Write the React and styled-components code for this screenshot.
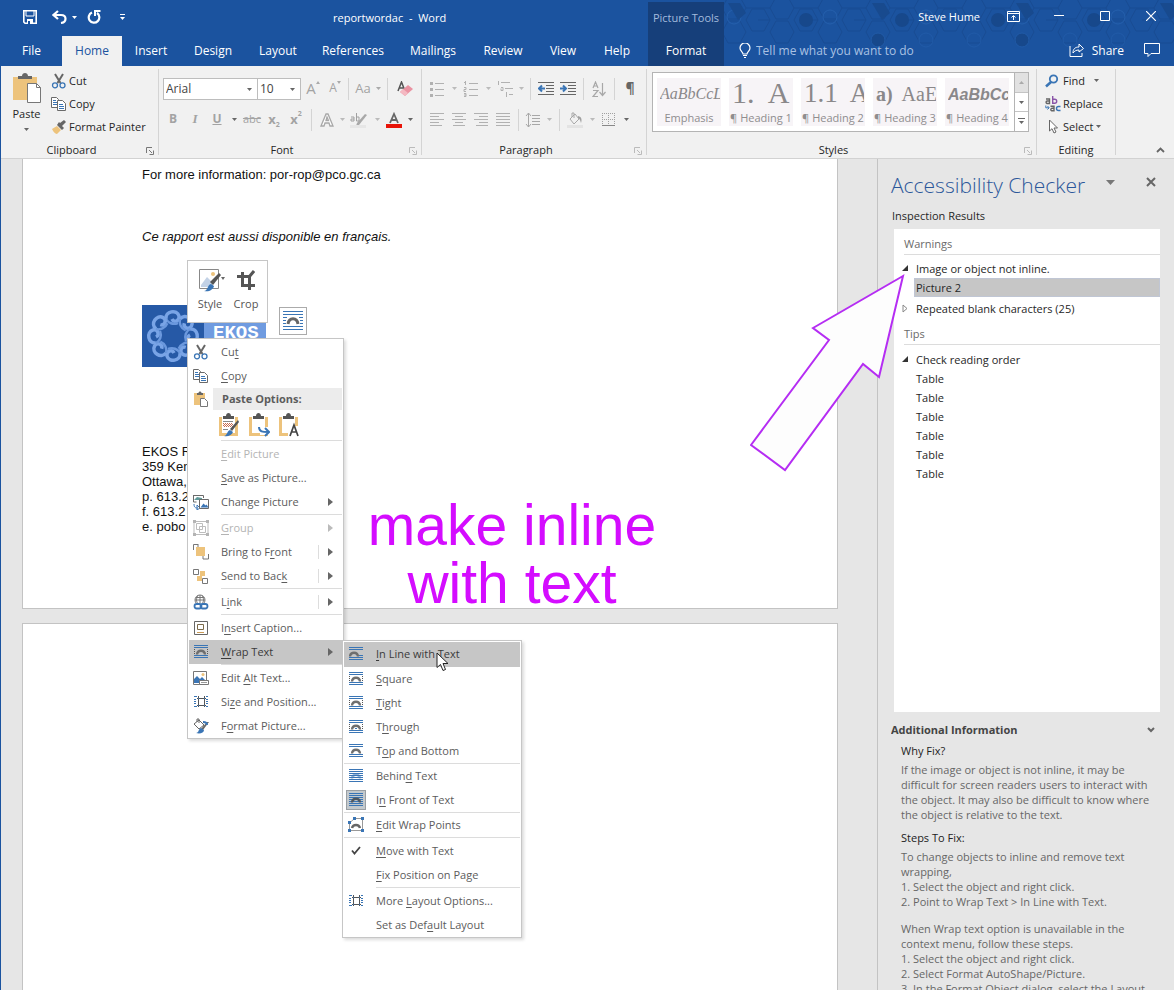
import React from "react";
import styled, { createGlobalStyle, css } from "styled-components";

const ui = `"Open Sans", "Noto Sans", sans-serif`;
const blue = "#1b539f";
const link = "#3a75b5";
const faint = "#b1b1b1";
const gold = "#edc37c";

const Global = createGlobalStyle`
  * { box-sizing: border-box; }
  body { margin: 0; overflow: hidden; font-family: ${ui}; font-size: 11px; color: #262626; }
  button { border: 0; background: none; padding: 0; margin: 0; font: inherit; color: inherit; cursor: default; }
  h1, h2, h3, p, ul { margin: 0; padding: 0; font-size: 11px; font-weight: 400; list-style: none; }
  svg { display: block; flex: none; }
`;

const Window = styled.div`
  display: flex;
  flex-direction: column;
  height: 100vh;
  border-left: 1px solid ${blue};
  background: #e6e6e6;
`;

/* ---------- header ---------- */
const Header = styled.header`
  display: flex;
  position: relative;
  flex: none;
  height: 66px;
  background: ${blue};
  color: #fff;
  font-size: 12px;
`;
const Pattern = styled.svg`
  position: absolute;
  right: 0;
  top: 0;
`;
const HeaderLeft = styled.div`
  width: 647px;
  display: flex;
  flex-direction: column;
`;
const HeaderRow = styled.div`
  display: flex;
  align-items: center;
  height: 36px;
`;
const TitleRow = styled(HeaderRow)`
  padding-bottom: 2px;
`;
const QuickBar = styled.div`
  display: flex;
  align-items: center;
  width: 332px;
  padding-left: 11px;
`;
const QuickButton = styled.button`
  width: ${(p) => p.$w}px;
  height: 22px;
  display: flex;
  align-items: center;
  justify-content: center;
`;
const DocTitle = styled.h1`
  font-size: 11px;
  white-space: pre;
`;
const Tabs = styled.nav`
  display: flex;
  height: 30px;
`;
const Tab = styled.button`
  width: ${(p) => p.$w}px;
  height: 30px;
  padding-bottom: 2px;
  text-align: center;
  white-space: nowrap;
  ${(p) => p.$active && css`
    background: #f1f1f1;
    color: ${blue};
  `}
`;
const ContextTab = styled.div`
  position: relative;
  width: 76px;
  margin-top: 2px;
  background: #163f7a;
  display: flex;
  flex-direction: column;
  text-align: center;
`;
const ContextTitle = styled.span`
  height: 34px;
  line-height: 32px;
  font-size: 11px;
  color: #a3bbdd;
`;
const HeaderRight = styled.div`
  position: relative;
  flex: 1;
  display: flex;
  flex-direction: column;
`;
const WindowRow = styled(HeaderRow)`
  justify-content: flex-end;
  padding-bottom: 4px;
`;
const UserName = styled.span`
  font-size: 11px;
  margin-right: 10px;
`;
const TellRow = styled(HeaderRow)`
  height: 30px;
  padding: 0 0 2px 15px;
`;
const TellInput = styled.input`
  flex: 1;
  min-width: 0;
  margin-left: 5px;
  border: 0;
  padding: 0;
  outline: 0;
  background: none;
  font: 12px ${ui};
  color: #fff;
  &::placeholder { color: #a9c1e3; opacity: 1; }
`;
const ShareButton = styled.button`
  display: flex;
  align-items: center;
  gap: 8px;
  margin-right: 20px;
`;
const CommentButton = styled.button`
  margin-right: 14px;
`;

/* ---------- ribbon ---------- */
const Ribbon = styled.div`
  display: flex;
  flex: none;
  height: 93px;
  padding-top: 3px;
  background: #f1f1f1;
  border-bottom: 1px solid #d2d2d2;
`;
const Group = styled.section`
  display: flex;
  flex-direction: column;
  width: ${(p) => p.$w}px;
  height: 86px;
  border-right: 1px solid #d4d4d4;
`;
const GroupBody = styled.div`
  display: flex;
  flex: none;
  height: 69px;
  padding-left: ${(p) => p.$pl || 0}px;
`;
const GroupLabel = styled.h2`
  position: relative;
  flex: none;
  line-height: 16px;
  text-align: center;
  padding-right: ${(p) => p.$pr || 0}px;
  padding-top: 4px;
`;
const Launcher = styled.button`
  position: absolute;
  right: 4px;
  top: 9px;
`;
const PasteButton = styled.button`
  width: 51px;
  margin-right: -1px;
  display: flex;
  flex-direction: column;
  align-items: center;
  padding-top: 4px;
`;
const PasteText = styled.span`
  line-height: 20px;
  margin-bottom: 4px;
`;
const CommandList = styled.div`
  display: flex;
  flex-direction: column;
`;
const Command = styled.button`
  display: flex;
  align-items: center;
  height: 23px;
  white-space: nowrap;
`;
const CommandIcon = styled.span`
  width: 18px;
  display: flex;
`;
const ToolRows = styled.div`
  display: flex;
  flex-direction: column;
  padding-top: 4px;
`;
const ToolRow = styled.div`
  display: flex;
  align-items: center;
  height: 31px;
`;
const Tool = styled.button`
  display: flex;
  align-items: center;
  justify-content: center;
  width: ${(p) => p.$w || 22}px;
  height: 22px;
  padding-bottom: ${(p) => (p.$f ? 2 : 0)}px;
  color: ${(p) => p.$c || "#a3a3a3"};
  font: ${(p) => p.$f || `13px ${ui}`};
  ${(p) => p.$u && css`text-decoration: underline;`}
  ${(p) => p.$s && css`text-decoration: line-through;`}
`;
const Script = styled.span`
  font: 700 7px ${ui};
  align-self: ${(p) => (p.$up ? "flex-start" : "flex-end")};
`;
const Divider = styled.span`
  width: 1px;
  height: 22px;
  margin: 0 ${(p) => p.$m}px;
  background: #d4d4d4;
`;
const Combo = styled.label`
  position: relative;
  display: block;
  width: ${(p) => p.$w}px;
  height: 22px;
  margin-right: -1px;
  & svg { position: absolute; right: 6px; top: 10px; pointer-events: none; }
`;
const Select = styled.select`
  appearance: none;
  width: 100%;
  height: 22px;
  border: 1px solid #bdbdbd;
  border-radius: 0;
  background: #fff;
  padding: 0 2px;
  font: 12px ${ui};
  color: #444;
`;
const Gallery = styled.div`
  display: flex;
  width: 377px;
  height: 60px;
  margin: 3px 0 0 5px;
  border: 1px solid #b4b4b4;
  background: #fff;
`;
const Cells = styled.div`
  flex: 1;
  display: flex;
  gap: 8px;
  padding: 5px 0 0 4px;
`;
const StyleCell = styled.button`
  width: 64px;
  height: 48px;
  background: #f7f4f7;
  display: flex;
  flex-direction: column;
`;
const Preview = styled.span`
  height: 32px;
  width: 60px;
  margin-left: 3px;
  overflow: hidden;
  white-space: pre;
  text-align: left;
  color: #8a888a;
  font: ${(p) => p.$f};
`;
const CellName = styled.span`
  width: 64px;
  line-height: 16px;
  text-align: center;
  white-space: nowrap;
  color: #8f8d8f;
`;
const Pager = styled.div`
  width: 14px;
  display: flex;
  flex-direction: column;
  border-left: 1px solid #b4b4b4;
`;
const PagerButton = styled.button`
  flex: 1;
  display: flex;
  align-items: center;
  justify-content: center;
  background: ${(p) => (p.$off ? "#e1e1e1" : "#fff")};
  & + & { border-top: 1px solid #c4c4c4; }
`;
const CollapseButton = styled.button`
  margin: auto 9px 5px auto;
`;

/* ---------- workspace ---------- */
const Workspace = styled.main`
  position: relative;
  flex: 1;
  min-height: 0;
  display: flex;
`;
const Canvas = styled.div`
  position: relative;
  flex: 1;
  min-width: 0;
  display: flex;
  flex-direction: column;
  gap: 14px;
  padding: 0 39px 0 21px;
  overflow: hidden;
`;
const Page = styled.article`
  background: #fff;
  border: 1px solid #c3c3c3;
  padding-left: 119px;
  font: 13px/16px "Liberation Sans", Arial, sans-serif;
  color: #111;
  ${(p) => p.$first
    ? css`border-top: 0; height: 450px; flex: none; padding-top: 8px;`
    : css`border-bottom: 0; flex: 1;`}
`;
const Para = styled.p`
  font-size: 13px;
  margin-bottom: ${(p) => p.$mb}px;
  ${(p) => p.$i && css`font-style: italic;`}
`;
const Address = styled.address`
  font-style: normal;
  line-height: 15px;
  margin-top: 77px;
`;

const MiniBar = styled.div`
  position: absolute;
  left: 186px;
  top: 101px;
  width: 81px;
  height: 63px;
  display: flex;
  padding: 6px 2px 0 4px;
  background: #fff;
  border: 1px solid #c6c6c6;
  color: #555;
`;
const MiniButton = styled.button`
  width: 36px;
  display: flex;
  flex-direction: column;
  align-items: center;
  & span { line-height: 22px; }
`;
const LayoutOptions = styled.button`
  position: absolute;
  left: 278px;
  top: 148px;
  width: 28px;
  height: 28px;
  display: flex;
  align-items: center;
  justify-content: center;
  background: #fff;
  border: 1px solid #ababab;
`;
const Menu = styled.div`
  position: absolute;
  left: ${(p) => p.$x}px;
  top: ${(p) => p.$y}px;
  width: ${(p) => p.$w}px;
  padding: 1px 1px 0;
  background: #fff;
  border: 1px solid #c6c6c6;
  box-shadow: 2px 2px 3px rgba(0, 0, 0, 0.14);
  color: #5c5c5c;
`;
const MenuItem = styled.button`
  display: flex;
  align-items: center;
  width: 100%;
  height: ${(p) => (p.$tall ? 25 : 24)}px;
  padding-bottom: ${(p) => (p.$tall ? 1 : 0)}px;
  text-align: left;
  white-space: nowrap;
  ${(p) => p.$off && css`color: #b4b4b4;`}
  ${(p) => p.$on && css`background: #c6c6c6; color: #3b3b3b;`}
  & u { text-underline-offset: 2px; }
`;
const MenuIcon = styled.span`
  width: 20px;
  height: 20px;
  margin: 0 10px 0 2px;
  display: flex;
  align-items: center;
  justify-content: center;
  ${(p) => p.$boxed && css`background: #c3c9cd; border: 1px solid #9a9fa3;`}
`;
const MenuText = styled.span`
  flex: 1;
  padding-bottom: 2px;
`;
const MenuMore = styled.span`
  display: flex;
  justify-content: flex-end;
  align-items: center;
  width: 24px;
  height: 14px;
  padding: 0 9px 0 0;
  ${(p) => p.$split && css`border-left: 1px solid #ddd;`}
`;
const Rule = styled.div`
  height: ${(p) => p.$h || 2}px;
  border-top: 1px solid #dcdcdc;
  margin-left: ${(p) => (p.$full ? 0 : 32)}px;
`;
const MenuHead = styled.div`
  display: flex;
  align-items: center;
  height: 22px;
`;
const MenuHeadText = styled.strong`
  flex: 1;
  height: 22px;
  margin-left: -8px;
  padding-left: 9px;
  line-height: 21px;
  background: #ececec;
`;
const PasteRow = styled.div`
  display: flex;
  gap: 4px;
  height: 30px;
  align-items: center;
  padding-left: 27px;
`;
const PasteOption = styled.button`
  width: 26px;
  height: 26px;
  display: flex;
  align-items: center;
  justify-content: center;
`;
const Note = styled.p`
  position: absolute;
  left: 361px;
  top: 337px;
  width: 300px;
  text-align: center;
  font: 57px/58px "Liberation Sans", Arial, sans-serif;
  color: #d40cff;
`;
const Arrow = styled.svg`
  position: absolute;
  right: 264px;
  top: 110px;
`;
const Pointer = styled.svg`
  position: absolute;
  left: 435px;
  top: 493px;
`;

/* ---------- accessibility pane ---------- */
const Pane = styled.aside`
  width: 297px;
  flex: none;
  display: flex;
  flex-direction: column;
  border-left: 1px solid #c3c3c3;
  padding: 9px 14px 0 13px;
  overflow: hidden;
`;
const PaneHead = styled.div`
  display: flex;
  align-items: flex-start;
`;
const PaneTitle = styled.h2`
  flex: 1;
  font-size: 21px;
  line-height: 34px;
  font-weight: 300;
  color: #2b579a;
  white-space: nowrap;
`;
const PaneButton = styled.button`
  width: 20px;
  height: 20px;
  margin: 4px 0 0 16px;
  display: flex;
  align-items: center;
  justify-content: center;
  & + & { margin: 4px 0 0 22px; }
`;
const PaneLabel = styled.h3`
  line-height: 16px;
  margin: 6px 0 5px 1px;
`;
const Results = styled.div`
  flex: 1;
  min-height: 200px;
  margin-left: 3px;
  padding: 7px 0 0 10px;
  background: #fff;
`;
const Section = styled.h3`
  color: #6a6a6a;
  line-height: 15px;
  padding-bottom: 3px;
  margin-bottom: 4px;
  border-bottom: 1px solid #dcdcdc;
`;
const Tree = styled.ul`
  margin-bottom: ${(p) => p.$mb || 0}px;
`;
const TreeRow = styled.li`
  display: flex;
  align-items: center;
  height: 19px;
  margin-top: ${(p) => p.$mt || 0}px;
`;
const Marker = styled.span`
  display: flex;
  justify-content: center;
  width: 14px;
  margin-left: -6px;
  margin-right: 4px;
`;
const Leaf = styled.button`
  flex: 1;
  height: 19px;
  margin-left: -2px;
  padding-left: 2px;
  text-align: left;
  ${(p) => p.$on && css`background: #c6c6c6; box-shadow: inset 0 0 0 1px #c0c6d4;`}
`;
const Info = styled.section`
  flex: none;
  height: 278px;
  overflow: hidden;
  padding-top: 9px;
`;
const InfoHead = styled.button`
  width: 100%;
  display: flex;
  align-items: center;
  justify-content: space-between;
  padding-right: 5px;
  font-weight: 700;
  line-height: 18px;
  color: #444;
`;
const InfoTitle = styled.h3`
  margin: ${(p) => p.$mt}px 0 3px 10px;
  line-height: 16px;
  color: #222;
`;
const InfoText = styled.p`
  margin: 0 -8px ${(p) => p.$mb || 0}px 10px;
  line-height: 15px;
  white-space: pre-line;
  color: #666;
`;

/* ---------- icons ---------- */
const Svg = ({ w = 16, h = 16, children, ...r }) => (
  <svg width={w} height={h} viewBox={`0 0 ${w} ${h}`} fill="none" aria-hidden="true" {...r}>{children}</svg>
);
const Caret = ({ c = "#666" }) => <Svg w={5} h={3}><path d="M0 0h5L2.500 3z" fill={c} /></Svg>;
const LaunchIcon = ({ c = "#777" }) => (
  <Svg w={8} h={8}><path d="M.5 6V.5H6M3 3l3 3M7.500 3.500v4h-4" stroke={c} /></Svg>
);
const Scissors = () => (
  <Svg>
    <path d="M4 1l5.500 9M12 1L6.500 10" stroke="#666" strokeWidth="2" />
    <circle cx="4" cy="12.300" r="2.500" stroke={link} strokeWidth="1.300" /><circle cx="11.500" cy="12.300" r="2.500" stroke={link} strokeWidth="1.300" />
  </Svg>
);
const CopyIcon = () => (
  <Svg>
    <path d="M.5 1.500h5l2 2v8h-7z" fill="#fff" stroke="#6a6a6a" />
    <path d="M2 4.500h3M2 6.500h4M2 8.500h4" stroke={link} />
    <path d="M6.500 4.500h5l3 3v7h-8z" fill="#fff" stroke="#6a6a6a" />
    <path d="M8 8.500h4M8 10.500h5M8 12.500h5" stroke={link} />
  </Svg>
);
const Painter = () => (
  <Svg>
    <path d="M1 10l5-3 4 4-4 4c-1 0-4-2-5-5z" fill={gold} />
    <path d="M6 6l5 5 2-2-2-2 4-4-2-2-4 3-1-1z" fill="#666" />
  </Svg>
);
const PasteBig = () => (
  <Svg w={28} h={31}>
    <path d="M0 4h24v23H0z" fill={gold} />
    <path d="M5 6V3h4c0-4 6-4 6 0h4v3z" fill="#666" />
    <path d="M14.500 10.500h9l4 4v15h-13z" fill="#fff" stroke="#777" /><path d="M23.500 10.500v4h4" stroke="#777" />
  </Svg>
);
const PasteSmall = () => (
  <Svg>
    <path d="M1 2h11v12H1z" fill={gold} /><path d="M4 4V2h1.500c0-2 3-2 3 0H10v2z" fill="#666" />
    <path d="M7.500 7.500h4l3 3v5h-7z" fill="#fff" stroke="#777" />
  </Svg>
);
const PasteKind = ({ kind }) => (
  <Svg w={22} h={24}>
    <path d="M2.500 4v17.500h16V4" stroke={gold} strokeWidth="3" />
    <path d="M5 6V3h3c0-4 5-4 5 0h3v3z" fill="#555" />
    {kind === "keep" && <><path d="M5 10.500h10M6 11.500h9M5 12.500h10M6 13.500h9" stroke="#c86b4e" strokeDasharray="1 1" /><path d="M5 8.500h10M5 16.500h5" stroke="#888" /><path d="M12 16l8-9 1 2-7 9z" fill="#555" /><path d="M6 23c3 0 3-5 6-6l3 2c-1 3-5 5-9 4z" fill={link} /></>}
    {kind === "merge" && <><path d="M12 14h9v8h-9z" fill="#fff" /><path d="M11 14c0 5 4 5 9 5M17 15l4 4-4 4" stroke={link} strokeWidth="2" /></>}
    {kind === "text" && <><path d="M10 13h12v11H10z" fill="#fff" /><path d="M12 23l4-11 4 11M13.500 19h5" stroke="#444" strokeWidth="1.700" /></>}
  </Svg>
);
const ListIcon = ({ kind }) => (
  <Svg w={16} h={16}>
    <path d="M6 2.500h9M6 8.500h9M6 14.500h9" stroke={faint} />
    {kind === "dot" ? <path d="M1 1h3v3H1zM1 7h3v3H1zM1 13h3v3H1z" fill={faint} />
      : <path d="M2.500 0v4M1 1.500h1M1 6.500h2v2H1v2h2M1 12.500h2v3H1M1 14h2" stroke={faint} />}
  </Svg>
);
const MultiList = () => (
  <Svg w={16} h={16}>
    <path d="M4 1.500h9M8 7.500h8M12 13.500h4M1.500 0v4M4 6.500h2v3H4v-2M9.500 11v5" stroke={faint} />
  </Svg>
);
const Indent = ({ out }) => (
  <Svg w={16} h={14}>
    <path d="M0 .5h16M8 3.500h8M8 6.500h8M8 9.500h8M0 12.500h16" stroke="#666" />
    {out ? <path d="M7 6.500H2M4 3.500L1 6.500l3 3" stroke={link} strokeWidth="2" /> : <path d="M0 6.500h5M3 3.500l3 3-3 3" stroke={link} strokeWidth="2" />}
  </Svg>
);
const alignPaths = {
  left: "M0 .5h14M0 3.500h9M0 6.500h14M0 9.500h9M0 12.500h12",
  center: "M0 .5h14M3 3.500h8M0 6.500h14M3 9.500h8M1 12.500h12",
  right: "M0 .5h14M5 3.500h9M0 6.500h14M5 9.500h9M2 12.500h12",
  justify: "M0 .5h14M0 3.500h14M0 6.500h14M0 9.500h14M0 12.500h14",
};
const Align = ({ kind }) => <Svg w={14} h={14}><path d={alignPaths[kind]} stroke={faint} /></Svg>;
const SortIcon = () => (
  <Svg w={14} h={16}>
    <path d="M1 7l2.500-6L6 7M2 5h3M1 9.500h5l-5 6h5M10.500 2v12M7.500 11l3 3.500 3-3.500" stroke="#a8a8a8" strokeWidth="1.200" />
  </Svg>
);
const Spacing = () => (
  <Svg w={16} h={16}><path d="M3.500 1v14M1 4l2.500-3L6 4M1 12l2.500 3L6 12M7 3.500h8M7 6.500h8M7 9.500h8M7 12.500h8" stroke="#a8a8a8" /></Svg>
);
const Bucket = () => (
  <Svg w={16} h={16}><path d="M3 7l5-5 4 5-5 5zM5 5V1h2v5" stroke="#a8a8a8" /><path d="M11 4c4 1 4 4 3 7-1-3-1-4-3-5z" fill="#a0a0a0" /><path d="M0 13h16v3H0z" fill="#e3e3e3" /></Svg>
);
const Borders = () => (
  <Svg w={14} h={14}><path d="M.5 0v12M6.500 0v12M12.500 0v12M0 .5h13M0 6.500h13" stroke="#a0a0a0" strokeDasharray="1 1" /><path d="M0 12.500h13" stroke="#888" /></Svg>
);
const Eraser = () => (
  <Svg w={16} h={16}><path d="M1 10L4.500 1 8 10M2 7h4" stroke="#555" strokeWidth="1.500" /><path d="M3 11l8-7 5 4-8 7z" fill="#ea93a2" /><path d="M3 11l3-3 5 4-3 3z" fill="#f4b9c2" /></Svg>
);
const OutlineA = () => <Svg w={14} h={14}><path d="M1 13L6 1h2l5 12h-3l-1-3H5l-1 3zM6 7.500h2.500L7 4z" fill="#fff" stroke="#a8a8a8" strokeWidth="1.300" /></Svg>;
const Highlight = () => (
  <Svg w={18} h={16}><path d="M7 11l8-9 2 1-8 10-3 1z" fill="#a8a8a8" /><path d="M1 5h3v4H1V7h3M6.500 1v8h2.500V5H7" stroke="#a0a0a0" /><path d="M0 13h16v3H0z" fill="#e6e6e6" /></Svg>
);
const FontColour = () => <Svg w={16} h={16}><path d="M4 11L8 2l4 9M5.500 8h5" stroke="#666" strokeWidth="1.800" /><path d="M0 12h16v4H0z" fill="#e81408" /></Svg>;
const FindIcon = () => <Svg w={14} h={14}><circle cx="8.500" cy="5" r="3.700" stroke={link} strokeWidth="1.800" /><path d="M6 8l-5 4.500" stroke={link} strokeWidth="2.500" /></Svg>;
const SelectIcon = () => <Svg w={14} h={15}><path d="M4.500 1v11l2.500-2.300L9 14l2-1-2-4h3.500z" stroke="#666" fill="#fff" /></Svg>;
const ReplaceIcon = () => (
  <Svg w={16} h={16}>
    <path d="M1 3h3.500v4.500H2a1.300 1.300 0 0 1 0-2.500h2.500" stroke="#666" strokeWidth="1.400" />
    <path d="M7.700 0v7.300h2a2 2 0 0 0 0-4h-2" stroke="#8a55a8" strokeWidth="1.400" />
    <path d="M5.500 10.200H9v4.600H6.700a1.300 1.300 0 0 1 0-2.500H9" stroke="#666" strokeWidth="1.400" />
    <path d="M15.500 10.500h-2a2 2 0 0 0 0 4h2" stroke={link} strokeWidth="1.400" />
    <path d="M.8 9.500v2.300H4M2.500 10l1.700 1.800L2.500 13.500" stroke={link} />
  </Svg>
);
/* Lines of text around an arch; each kind of wrapping leaves out other lines. */
const wrapLines = {
  inline: "M0 .5h14M0 2.500h14M10 8.500h4M0 10.500h14M0 12.500h14",
  square: "M0 .5h14M0 2.500h14M0 10.500h14M0 12.500h14",
  through: "M0 .5h14M0 2.500h14M0 10.500h14M0 12.500h14M6 8.500h2",
  top: "M0 .5h14M0 2.500h14M0 10.500h14M0 12.500h14",
  behind: "M0 .5h14M0 2.500h14M0 4.500h14M0 6.500h14M0 8.500h14M0 10.500h14M0 12.500h14",
  front: "M0 .5h14M0 2.500h14M0 4.500h14M0 6.500h14M0 8.500h14M0 10.500h14M0 12.500h14",
};
const archColour = { behind: "#8fb2d8", front: "#505860" };
const Wrap = ({ kind = "square" }) => {
  const lines = <path d={wrapLines[kind]} stroke={link} />;
  const arch = <path d={kind === "inline" ? "M1 9.500c.5-5 7.500-5 8 0" : "M3 9.500c.5-5 7.500-5 8 0"} stroke={archColour[kind] || "#6e6e6e"} strokeWidth="2.400" />;
  return (
    <Svg w={14} h={14}>
      {kind === "behind" ? <>{arch}{lines}</> : <>{lines}{arch}</>}
      {(kind === "square" || kind === "through") && <path d="M.5 4v6M13.500 4v6" stroke="#555" strokeDasharray="1 1" />}
    </Svg>
  );
};
const SizePos = () => (
  <Svg w={14} h={14}><path d="M4.500 1v11M10.500 1v11M3 3.500h9M3 10.500h9" stroke="#555" /><path d="M0 1.500h3M0 4.500h2M0 6.500h2M0 8.500h2M0 11.500h3M12 1.500h2M12 4.500h2M12 6.500h2M12 8.500h2M12 11.500h2" stroke={link} /><path d="M4 3h1v1H4zM10 3h1v1h-1zM4 10h1v1H4zM10 10h1v1h-1z" fill={link} /></Svg>
);
const ChangePic = () => (
  <Svg>
    <path d="M.5 1v7h3M.5 1.500h10V4" stroke="#6a6a6a" /><path d="M1 6l3-3 5 1v2z" fill="#5f9a9a" /><path d="M1 10c0 4 2 4 4 4M4 11l3 3-3 2z" stroke={link} />
    <path d="M6.500 5.500h9v9h-9z" fill="#fff" stroke="#6a6a6a" /><path d="M7.500 13.500l3-4 2 2 1-1 2 3z" fill={link} />
  </Svg>
);
const GroupIcon = () => (
  <Svg><path d="M3.500 3.500h6v6h-6zM6.500 6.500h6v6h-6zM1 1.500h14v13H1z" stroke="#bdbdbd" /><path d="M0 0h3v3H0zM13 0h3v3h-3zM0 13h3v3H0zM13 13h3v3h-3z" fill="#b4b4b4" /></Svg>
);
const Front = () => <Svg><path d="M3 3h9v9H3z" fill={gold} /><path d="M5 .5H.5V6M5 0v3M15.500 10v5H10v-3" stroke="#777" /></Svg>;
const Back = () => <Svg><path d="M7 3h5v5H7zM4 8h5v5H4z" fill={gold} /><path d="M.5 1.500h5v5h-5zM9.500 10.500h5v5h-5z" fill="#fff" stroke="#777" /></Svg>;
const LinkIcon = () => (
  <Svg><circle cx="7" cy="6" r="5" stroke="#777" /><path d="M2 6h10M7 1v8M3 3.500h8M5 1.500c-2 3-2 6 0 8M9 1.500c2 3 2 6 0 8" stroke="#777" /><path d="M0 9h16v7H0z" fill="#fff" /><rect x="1.500" y="10" width="7" height="4.500" rx="2.200" stroke={link} strokeWidth="1.800" /><rect x="7.500" y="10" width="7" height="4.500" rx="2.200" stroke={link} strokeWidth="1.800" /></Svg>
);
const Caption = () => <Svg><path d="M1.500 1.500h13v13h-13z" stroke="#666" /><path d="M4.500 4.500h6v5h-6z" stroke="#7b6a4a" /><path d="M4 12.500h7" stroke="#c99a55" /></Svg>;
const AltText = () => <Svg><path d="M.5 1.500h13v13H.5z" fill="#fff" stroke="#777" /><path d="M1 13V9l3-3 3 3 2-2 4 4v2z" fill={link} /><circle cx="10" cy="4.500" r="1.500" fill={gold} /><path d="M6.500 10.500h9v4h-9z" fill="#fff" stroke="#777" /><path d="M8 12.500h6" stroke="#999" /></Svg>;
const FormatPic = () => <Svg><path d="M1 6l5-4 5 5-5 4zM4 4V1h2v4" stroke="#666" /><path d="M16 4l-6 8-2-1 6-7z" fill="#666" /><path d="M3 15c3 0 2-4 5-5l3 2c0 3-4 4-8 3z" fill={link} /><path d="M10 4c3 0 4 1 4 3" stroke={link} strokeWidth="2" /></Svg>;
const EditPoints = () => <Svg><path d="M1.500 6l5-4.500h8v12h-13z" stroke="#999" /><path d="M4 11c1-4 7-4 8 0" stroke="#666" strokeWidth="2.400" /><path d="M0 4h3v3H0zM5 0h3v3H5zM13 0h3v3h-3zM0 12h3v3H0zM13 12h3v3h-3z" fill={link} /></Svg>;
const Check = () => <Svg w={10} h={10}><path d="M1 4.500l2.500 3L9 1" stroke="#444" strokeWidth="1.800" /></Svg>;
const StyleIcon = () => (
  <Svg w={30} h={26}>
    <path d="M4.500 2.500h19v19h-19z" fill="#fff" stroke="#888" /><path d="M6 18l6-8 5 5 1 5H6z" fill="#c3d2e6" /><circle cx="18" cy="7" r="2" fill={gold} />
    <path d="M15 15l9-9 2 2-8 10z" fill="#555" /><path d="M9 24c4 0 3-6 7-7l3 2c-1 4-5 6-10 5z" fill={link} /><path d="M26 10h4l-2 3z" fill="#666" />
  </Svg>
);
const CropIcon = () => <Svg w={18} h={26}><path d="M5.500 5v13.500H18M0 9.500h12.500V23M12 10l5-6" stroke="#555" strokeWidth="3" /></Svg>;

/* Ring of curls on the picture, with the company name on the lighter half. */
const PictureSvg = () => (
  <Svg w={124} h={62}>
    <path d="M0 0h124v62H0z" fill="#2659a6" />
    <path d="M62 0h62v62H62z" fill="#6f9be0" />
    {[0, 45, 90, 135, 180, 225, 270, 315].map((a) => (
      <g key={a} transform={`rotate(${a} 31 31)`}>
        <path d="M24 14c-1-8 11-10 13-3 1 5-5 7-7 3" stroke="#79a4e6" strokeWidth="3.500" />
        <path d="M24 14c2 4 7 6 12 4" stroke="#6b98dd" strokeWidth="2.500" />
      </g>
    ))}
    <text x="71" y="33" fill="#fff" fontFamily="Liberation Mono" fontWeight="700" fontSize="19">EKOS</text>
  </Svg>
);

const Hex = ({ x, y }) => <path d={`M${x - 12} ${y}l6-11h12l6 11-6 11h-12z`} stroke="#194c93" />;
const HexPattern = () => (
  <Pattern width="450" height="52" viewBox="0 0 450 52" fill="none" aria-hidden="true">
    {[10, 58, 106, 154, 202, 250, 298, 346, 394, 442].map((x, i) => (
      <g key={x}>
        <Hex x={x} y={8} /><Hex x={x + 24} y={20} /><Hex x={x} y={32} />
        <path d={`M${x + 12} 8h24M${x + 36} 20h-12`} stroke="#194c93" />
        {i % 2 ? <circle cx={x + 24} cy={20} r="7" fill="#17488b" /> : <circle cx={x} cy={17} r="7" stroke="#2560ad" />}
        {i > 2 && i < 9 && <circle cx={x} cy={40} r="7" fill={i % 3 ? "none" : "#17488b"} stroke="#215ba8" />}
        {i % 3 === 0 && <path d={`M${x - 6} 3h12l6 10-8 7z`} fill="#184a8e" />}
      </g>
    ))}
  </Pattern>
);

const Key = ({ t }) => {
  const i = t.indexOf("_");
  return i < 0 ? t : <>{t.slice(0, i)}<u>{t[i + 1]}</u>{t.slice(i + 2)}</>;
};
const Item = ({ icon, t, off, on, tall, boxed, more, split }) => (
  <MenuItem type="button" $off={off} $on={on} $tall={tall}>
    <MenuIcon $boxed={boxed}>{icon}</MenuIcon>
    <MenuText><Key t={t} /></MenuText>
    {more && <MenuMore $split={split}><Svg w={5} h={8}><path d="M0 0l5 4-5 4z" fill={off ? "#bbb" : "#666"} /></Svg></MenuMore>}
  </MenuItem>
);

const tabs = [["File", 61], ["Home", 60], ["Insert", 58], ["Design", 66], ["Layout", 64], ["References", 86], ["Mailings", 74], ["Review", 66], ["View", 54], ["Help", 54]];
const styles = [
  ["Emphasis", "AaBbCcL", `italic 16px/32px "Liberation Serif", serif`],
  ["¶ Heading 1", "1.  A", `30px/30px "Liberation Serif", serif`],
  ["¶ Heading 2", "1.1  A", `27px/30px "Liberation Serif", serif`],
  ["¶ Heading 3", null, `20px/32px "Liberation Serif", serif`],
  ["¶ Heading 4", "AaBbCc", `italic 700 16px/34px "Liberation Sans", sans-serif`],
];

export default function App() {
  return (
    <Window>
      <Global />
      <Header>
        <HexPattern />
        <HeaderLeft>
          <TitleRow>
            <QuickBar>
              <QuickButton $w={36} aria-label="Save"><Svg w={14} h={14}><path d="M.8.8h12.400v12.400H2L.8 12z" stroke="#fff" strokeWidth="1.600" /><path d="M3 1h8v5H3z" fill={blue} stroke="#fff" /><path d="M4 9h6v5H4z" fill="#fff" /><path d="M5 11h2v3H5z" fill={blue} /></Svg></QuickButton>
              <QuickButton $w={22} aria-label="Undo"><Svg w={15} h={14}><path d="M6 1L1.500 5 6 9M2 5h7c6 0 6 7 0 8" stroke="#fff" strokeWidth="2.200" /></Svg></QuickButton>
              <QuickButton $w={8} aria-label="Undo list"><Caret c="#fff" /></QuickButton>
              <QuickButton $w={32} aria-label="Redo"><Svg w={14} h={14}><path d="M5 2.500a5.300 5.300 0 1 0 5 .5" stroke="#fff" strokeWidth="2.200" /><path d="M13.500 1H8v5" stroke="#fff" strokeWidth="2" /></Svg></QuickButton>
              <QuickButton $w={24} aria-label="Customize"><Svg w={5} h={6}><path d="M0 .5h5" stroke="#fff" /><path d="M0 3h5L2.500 6z" fill="#fff" /></Svg></QuickButton>
            </QuickBar>
            <DocTitle>{"reportwordac  -  Word"}</DocTitle>
          </TitleRow>
          <Tabs>{tabs.map(([t, w]) => <Tab key={t} $w={w} $active={t === "Home"}>{t}</Tab>)}</Tabs>
        </HeaderLeft>
        <ContextTab><ContextTitle>Picture Tools</ContextTitle><Tab $w={76}>Format</Tab></ContextTab>
        <HeaderRight>
          <WindowRow>
            <UserName>Steve Hume</UserName>
            <QuickButton $w={46} aria-label="Ribbon display"><Svg w={13} h={11}><path d="M.5.5h12v10H.5zM.5 2.500h12M6.500 9V5M4.500 6.500l2-2 2 2" stroke="#fff" /></Svg></QuickButton>
            <QuickButton $w={46} aria-label="Minimize"><Svg w={10} h={2}><path d="M0 .5h10" stroke="#fff" /></Svg></QuickButton>
            <QuickButton $w={46} aria-label="Maximize"><Svg w={10} h={10}><path d="M.5.5h9v9h-9z" stroke="#fff" /></Svg></QuickButton>
            <QuickButton $w={46} aria-label="Close"><Svg w={10} h={10}><path d="M0 0l10 10M10 0L0 10" stroke="#fff" strokeWidth="1.200" /></Svg></QuickButton>
          </WindowRow>
          <TellRow>
            <Svg w={12} h={15}><path d="M4 11c0-2-3-3-3-6a5 5 0 0 1 10 0c0 3-3 4-3 6zM4 12.500h4M5 14.500h2" stroke="#fff" strokeWidth="1.200" /></Svg>
            <TellInput aria-label="Tell me what you want to do" placeholder="Tell me what you want to do" />
            <ShareButton><Svg w={15} h={14}><path d="M1 3v10.500h12V10" stroke="#fff" /><path d="M4 10c0-4 2-6 6-6V1l4.500 4.500L10 9V7C7 7 5.500 8 4 10z" stroke="#fff" /></Svg>Share</ShareButton>
            <CommentButton aria-label="Comments"><Svg w={16} h={15}><path d="M.5.5h15v10H7l-3 3v-3H.5z" stroke="#fff" /></Svg></CommentButton>
          </TellRow>
        </HeaderRight>
      </Header>

      <Ribbon>
        <Group $w={158}>
          <GroupBody>
            <PasteButton><PasteBig /><PasteText>Paste</PasteText><Caret /></PasteButton>
            <CommandList>
              <Command><CommandIcon><Scissors /></CommandIcon>Cut</Command>
              <Command><CommandIcon><CopyIcon /></CommandIcon>Copy</Command>
              <Command><CommandIcon><Painter /></CommandIcon>Format Painter</Command>
            </CommandList>
          </GroupBody>
          <GroupLabel $pr={16}>Clipboard<Launcher aria-label="Clipboard settings"><LaunchIcon /></Launcher></GroupLabel>
        </Group>
        <Group $w={263}>
          <GroupBody $pl={4}>
            <ToolRows>
              <ToolRow>
                <Combo $w={95}><Select aria-label="Font" defaultValue="Arial"><option>Arial</option></Select><Caret /></Combo>
                <Combo $w={44}><Select aria-label="Font size" defaultValue="10"><option>10</option></Select><Caret /></Combo>
                <Tool $w={26} $f={`15px ${ui}`}>A<Svg w={4} h={14}><path d="M0 3l2-3 2 3z" fill="#aaa" /></Svg></Tool>
                <Tool $w={18} $f={`12px ${ui}`}>A<Svg w={4} h={14}><path d="M0 0l2 3 2-3z" fill="#aaa" /></Svg></Tool>
                <Divider $m={4} />
                <Tool $w={20} $f={`13px ${ui}`}>Aa</Tool><Tool $w={10}><Caret c="#aaa" /></Tool>
                <Divider $m={4} />
                <Tool $w={26}><Eraser /></Tool>
              </ToolRow>
              <ToolRow>
                <Tool $w={20} $f={`700 12px ${ui}`}>B</Tool>
                <Tool $w={24} $f={`italic 700 13px "Liberation Serif", serif`}>I</Tool>
                <Tool $w={20} $f={`700 12px ${ui}`} $u>U</Tool><Tool $w={14}><Caret /></Tool>
                <Tool $w={22} $f={`11px ${ui}`} $s>abc</Tool>
                <Tool $f={`700 13px ${ui}`}>x<Script>2</Script></Tool>
                <Tool $f={`700 13px ${ui}`}>x<Script $up>2</Script></Tool>
                <Divider $m={4} />
                <Tool $w={22}><OutlineA /></Tool><Tool $w={8}><Caret c="#bbb" /></Tool>
                <Tool $w={26}><Highlight /></Tool><Tool $w={10}><Caret c="#bbb" /></Tool>
                <Tool $w={24}><FontColour /></Tool><Tool $w={8}><Caret /></Tool>
              </ToolRow>
            </ToolRows>
          </GroupBody>
          <GroupLabel $pr={16}>Font<Launcher aria-label="Font settings"><LaunchIcon c="#bbb" /></Launcher></GroupLabel>
        </Group>
        <Group $w={225}>
          <GroupBody $pl={4}>
            <ToolRows>
              <ToolRow>
                <Tool $w={22}><ListIcon kind="dot" /></Tool><Tool $w={12}><Caret c="#bbb" /></Tool>
                <Tool $w={22}><ListIcon /></Tool><Tool $w={12}><Caret c="#bbb" /></Tool>
                <Tool $w={22}><MultiList /></Tool><Tool $w={10}><Caret c="#bbb" /></Tool>
                <Divider $m={4} />
                <Tool><Indent out /></Tool><Tool><Indent /></Tool>
                <Divider $m={4} />
                <Tool><SortIcon /></Tool>
                <Divider $m={4} />
                <Tool $c="#666" $f={`700 14px ${ui}`}>¶</Tool>
              </ToolRow>
              <ToolRow>
                <Tool><Align kind="left" /></Tool><Tool><Align kind="center" /></Tool><Tool><Align kind="right" /></Tool><Tool><Align kind="justify" /></Tool>
                <Divider $m={4} />
                <Tool $w={20}><Spacing /></Tool><Tool $w={12}><Caret c="#bbb" /></Tool>
                <Divider $m={4} />
                <Tool $w={22}><Bucket /></Tool><Tool $w={12}><Caret c="#bbb" /></Tool>
                <Tool $w={22}><Borders /></Tool><Tool $w={12}><Caret /></Tool>
              </ToolRow>
            </ToolRows>
          </GroupBody>
          <GroupLabel $pr={16}>Paragraph<Launcher aria-label="Paragraph settings"><LaunchIcon c="#bbb" /></Launcher></GroupLabel>
        </Group>
        <Group $w={390}>
          <GroupBody>
            <Gallery>
              <Cells>
                {styles.map(([name, sample, f]) => (
                  <StyleCell key={name}>
                    <Preview $f={f}>{sample || <><b>a)</b>{"  AaE"}</>}</Preview>
                    <CellName>{name}</CellName>
                  </StyleCell>
                ))}
              </Cells>
              <Pager>
                <PagerButton $off aria-label="Previous styles"><Svg w={5} h={3}><path d="M0 3h5L2.500 0z" fill="#aaa" /></Svg></PagerButton>
                <PagerButton aria-label="Next styles"><Caret /></PagerButton>
                <PagerButton aria-label="All styles"><Svg w={7} h={7}><path d="M0 .5h7" stroke="#666" /><path d="M1 3h5L3.500 6z" fill="#666" /></Svg></PagerButton>
              </Pager>
            </Gallery>
          </GroupBody>
          <GroupLabel $pr={16}>Styles<Launcher aria-label="Styles settings"><LaunchIcon c="#bbb" /></Launcher></GroupLabel>
        </Group>
        <Group $w={79}>
          <GroupBody $pl={8}>
            <CommandList>
              <Command><CommandIcon><FindIcon /></CommandIcon>Find<Tool $w={24}><Caret /></Tool></Command>
              <Command><CommandIcon><ReplaceIcon /></CommandIcon>Replace</Command>
              <Command><CommandIcon><SelectIcon /></CommandIcon>Select<Tool $w={10}><Caret /></Tool></Command>
            </CommandList>
          </GroupBody>
          <GroupLabel>Editing</GroupLabel>
        </Group>
        <CollapseButton aria-label="Collapse the ribbon"><Svg w={9} h={6}><path d="M1 5l3.500-3.500L8 5" stroke="#666" strokeWidth="1.800" /></Svg></CollapseButton>
      </Ribbon>

      <Workspace>
        <Canvas>
          <Page $first>
            <Para $mb={46}>For more information: por-rop@pco.gc.ca</Para>
            <Para $mb={60} $i>Ce rapport est aussi disponible en français.</Para>
            <PictureSvg />
            <Address>EKOS R<br />359 Ken<br />Ottawa,<br />p. 613.2<br />f. 613.2<br />e. pobo</Address>
          </Page>
          <Page />
          <Note>make inline with text</Note>
          <MiniBar>
            <MiniButton><StyleIcon /><span>Style</span></MiniButton>
            <MiniButton><CropIcon /><span>Crop</span></MiniButton>
          </MiniBar>
          <LayoutOptions aria-label="Layout options">
            <Svg w={20} h={20}><path d="M0 .5h20M0 3.500h20M0 6.500h4M16 6.500h4M0 9.500h3M17 9.500h3M0 12.500h3M17 12.500h3M0 15.500h20M0 18.500h20" stroke={link} /><path d="M5 13c1-7 9-7 10 0" stroke="#666" strokeWidth="3" /></Svg>
          </LayoutOptions>
          <Menu $x={186} $y={179} $w={157}>
            <Item icon={<Scissors />} t="Cu_t" />
            <Item icon={<CopyIcon />} t="_Copy" />
            <MenuHead><MenuIcon><PasteSmall /></MenuIcon><MenuHeadText>Paste Options:</MenuHeadText></MenuHead>
            <PasteRow>
              <PasteOption aria-label="Keep source formatting"><PasteKind kind="keep" /></PasteOption>
              <PasteOption aria-label="Merge formatting"><PasteKind kind="merge" /></PasteOption>
              <PasteOption aria-label="Keep text only"><PasteKind kind="text" /></PasteOption>
            </PasteRow>
            <Rule />
            <Item off t="_Edit Picture" />
            <Item t="_Save as Picture..." />
            <Item icon={<ChangePic />} t="Chan_ge Picture" more />
            <Rule />
            <Item off icon={<GroupIcon />} t="_Group" more />
            <Item icon={<Front />} t="Bring to F_ront" more split />
            <Item icon={<Back />} t="Send to Bac_k" more split />
            <Rule />
            <Item icon={<LinkIcon />} t="L_ink" more split />
            <Rule />
            <Item icon={<Caption />} t="I_nsert Caption..." />
            <Item on icon={<Wrap />} t="_Wrap Text" more />
            <Rule />
            <Item icon={<AltText />} t="Edit _Alt Text..." />
            <Item icon={<SizePos />} t="Si_ze and Position..." />
            <Item icon={<FormatPic />} t="F_ormat Picture..." />
          </Menu>
          <Menu $x={341} $y={481} $w={180}>
            <Item on tall icon={<Wrap kind="inline" />} t="_In Line with Text" />
            <Item icon={<Wrap />} t="_Square" />
            <Item icon={<Wrap />} t="_Tight" />
            <Item icon={<Wrap kind="through" />} t="T_hrough" />
            <Item icon={<Wrap kind="top" />} t="T_op and Bottom" />
            <Rule $full $h={1} />
            <Item icon={<Wrap kind="behind" />} t="Behin_d Text" />
            <Item icon={<Wrap kind="front" />} boxed t="I_n Front of Text" />
            <Rule $full $h={1} />
            <Item icon={<EditPoints />} t="_Edit Wrap Points" />
            <Rule $full />
            <Item icon={<Check />} t="_Move with Text" />
            <Item t="_Fix Position on Page" />
            <Rule />
            <Item icon={<SizePos />} t="More _Layout Options..." />
            <Item t="Set as Def_ault Layout" />
          </Menu>
          <Pointer width="13" height="20" viewBox="0 0 13 20" aria-hidden="true"><path d="M1 1v14.500l3.500-3 2.500 6 2.500-1L7 11.500h5z" fill="#fff" stroke="#222" /></Pointer>
        </Canvas>

        <Pane>
          <PaneHead>
            <PaneTitle>Accessibility Checker</PaneTitle>
            <PaneButton aria-label="Pane options"><Svg w={9} h={5}><path d="M0 0h9L4.500 5z" fill="#777" /></Svg></PaneButton>
            <PaneButton aria-label="Close pane"><Svg w={10} h={10}><path d="M1 1l8 8M9 1L1 9" stroke="#666" strokeWidth="2" /></Svg></PaneButton>
          </PaneHead>
          <PaneLabel>Inspection Results</PaneLabel>
          <Results>
            <Section>Warnings</Section>
            <Tree $mb={8}>
              <TreeRow><Marker><Svg w={6} h={7}><path d="M6 0v6H0z" fill="#333" /></Svg></Marker>Image or object not inline.</TreeRow>
              <TreeRow><Marker /><Leaf $on>Picture 2</Leaf></TreeRow>
              <TreeRow $mt={2}><Marker><Svg w={6} h={9}><path d="M1 1l4 3.500L1 8z" stroke="#888" /></Svg></Marker>Repeated blank characters (25)</TreeRow>
            </Tree>
            <Section>Tips</Section>
            <Tree>
              <TreeRow $mt={5}><Marker><Svg w={6} h={7}><path d="M6 0v6H0z" fill="#333" /></Svg></Marker>Check reading order</TreeRow>
              {[1, 2, 3, 4, 5, 6].map((n) => <TreeRow key={n}><Marker /><Leaf>Table</Leaf></TreeRow>)}
            </Tree>
          </Results>
          <Info>
            <InfoHead>Additional Information<Svg w={8} h={6}><path d="M1 1l3 3 3-3" stroke="#666" strokeWidth="2" /></Svg></InfoHead>
            <InfoTitle $mt={4}>Why Fix?</InfoTitle>
            <InfoText>{"If the image or object is not inline, it may be\ndifficult for screen readers users to interact with\nthe object. It may also be difficult to know where\nthe object is relative to the text."}</InfoText>
            <InfoTitle $mt={8}>Steps To Fix:</InfoTitle>
            <InfoText $mb={12}>{"To change objects to inline and remove text\nwrapping,\n1. Select the object and right click.\n2. Point to Wrap Text > In Line with Text."}</InfoText>
            <InfoText>{"When Wrap text option is unavailable in the\ncontext menu, follow these steps.\n1. Select the object and right click.\n2. Select Format AutoShape/Picture.\n3. In the Format Object dialog, select the Layout"}</InfoText>
          </Info>
        </Pane>

        <Arrow width="160" height="210" viewBox="0 0 160 210" fill="none" aria-hidden="true">
          <path d="M153 7L63 59l16 12-78 105 34 25 78-106 16 13z" fill="#fdfdfd" stroke="#b52df3" strokeWidth="2" />
        </Arrow>
      </Workspace>
    </Window>
  );
}
